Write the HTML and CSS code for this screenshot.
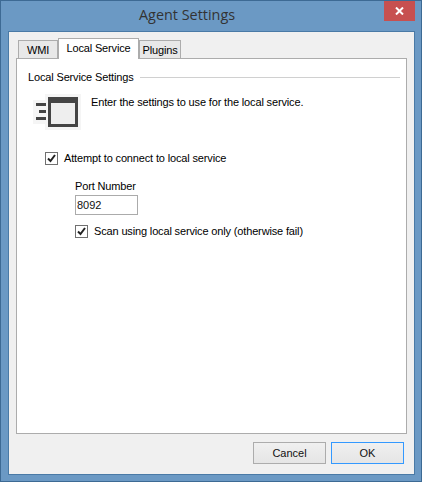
FILE: index.html
```html
<!DOCTYPE html>
<html lang="en">

<head>
  <meta charset="UTF-8">
  <title>Agent Settings</title>
  <link rel="stylesheet" href="styles.css">
</head>

<body>
  <div class="window">
    <div class="titlebar">
      <span class="title">Agent Settings</span>
      <button class="close-btn">
        <svg width="9" height="8" viewBox="0 0 9 8">
          <path d="M1 0.5 L8 7.5 M8 0.5 L1 7.5" stroke="#fff" stroke-width="2" fill="none" />
        </svg>
      </button>
    </div>

    <div class="client">
      <div class="tabs">
        <div class="tab tab-wmi">WMI</div>
        <div class="tab active">Local Service</div>
        <div class="tab tab-plugins">Plugins</div>
      </div>

      <div class="panel">
        <div class="group-head">
          <span>Local Service Settings</span>
          <div class="group-line"></div>
        </div>

        <div class="intro">
          <svg class="intro-icon" width="48" height="36" viewBox="0 0 48 36">
            <rect x="0" y="6" width="14" height="24" fill="#f5f5f5" />
            <rect x="12" y="0" width="36" height="36" fill="#f5f5f5" />
            <rect x="3" y="9" width="10" height="3" fill="#444" />
            <rect x="6" y="16" width="7" height="3" fill="#444" />
            <rect x="3" y="23" width="10" height="3" fill="#444" />
            <rect x="15" y="3" width="30" height="30" fill="#444" />
            <rect x="18" y="9" width="24" height="21" fill="#eee" />
          </svg>
          <span class="intro-text">Enter the settings to use for the local service.</span>
        </div>

        <label class="check-row">
          <span class="check">
            <svg width="11" height="11" viewBox="0 0 11 11">
              <path d="M2 5.5 L4.5 8 L9 2" stroke="#222" stroke-width="2" fill="none" />
            </svg>
          </span>
          Attempt to connect to local service
        </label>

        <div class="sub">
          <div class="port-label">Port Number</div>
          <input class="port-input" type="text" value="8092">
          <label class="check-row">
            <span class="check">
              <svg width="11" height="11" viewBox="0 0 11 11">
                <path d="M2 5.5 L4.5 8 L9 2" stroke="#222" stroke-width="2" fill="none" />
              </svg>
            </span>
            Scan using local service only (otherwise fail)
          </label>
        </div>
      </div>

      <div class="footer">
        <button class="btn">Cancel</button>
        <button class="btn default">OK</button>
      </div>
    </div>
  </div>
</body>

</html>
```

FILE: styles.css
```css
html, body {
  margin: 0;
  height: 100%;
}

body {
  font-family: "Liberation Sans", Arial, sans-serif;
  font-size: 11px;
  letter-spacing: -0.15px;
  color: #000;
}

.window {
  box-sizing: border-box;
  width: 422px;
  height: 482px;
  display: flex;
  flex-direction: column;
  background: #6b99c4;
  border: 1px solid #3d6a94;
  padding: 0 6px 6px 7px;
}

.titlebar {
  height: 30px;
  flex: none;
  display: flex;
  align-items: flex-start;
}

.title {
  margin-left: 131px;
  margin-top: 4px;
  font-family: "Open Sans", sans-serif;
  font-size: 14.4px;
  letter-spacing: 0;
  line-height: 20px;
  color: #333;
}

.close-btn {
  margin-left: auto;
  margin-right: 0;
  width: 31px;
  height: 20px;
  padding: 0;
  border: none;
  background: #c75050;
  display: flex;
  align-items: center;
  justify-content: center;
}

.client {
  flex: 1;
  display: flex;
  flex-direction: column;
  background: #f0f0f0;
  border: 1px solid #4a7aa6;
  padding: 6px 7px 10px 7px;
}

.tabs {
  display: flex;
  align-items: flex-end;
  height: 21px;
  padding-left: 2px;
  margin-bottom: -1px;
  flex: none;
}

.tab {
  box-sizing: border-box;
  height: 19px;
  line-height: 19px;
  text-align: center;
  background: #e8e8e8;
  border: 1px solid #acacac;
  border-bottom: none;
}

.tab-wmi {
  width: 40px;
}

.tab-plugins {
  width: 42px;
}

.tab.active {
  width: 81px;
  height: 21px;
  line-height: 18px;
  background: #fff;
  position: relative;
  z-index: 1;
}

.panel {
  flex: 1;
  background: #fff;
  border: 1px solid #acacac;
  padding: 10px 6px 0 11px;
}

.group-head {
  display: flex;
  align-items: center;
  gap: 6px;
  height: 16px;
}

.group-line {
  flex: 1;
  height: 1px;
  background: #d0d0d0;
}

.intro {
  display: flex;
  align-items: flex-start;
  margin: 9px 0 0 5px;
  gap: 10px;
}

.intro-icon {
  flex: none;
}

.intro-text {
  line-height: 16px;
}

.check-row {
  display: flex;
  align-items: center;
  gap: 6px;
  height: 16px;
}

.intro + .check-row {
  margin: 20px 0 0 17px;
}

.check {
  box-sizing: border-box;
  width: 13px;
  height: 13px;
  background: #fff;
  border: 1px solid #707070;
  display: flex;
  align-items: center;
  justify-content: center;
}

.sub {
  margin: 13px 0 0 47px;
}

.port-label {
  line-height: 14px;
}

.port-input {
  display: block;
  box-sizing: border-box;
  width: 63px;
  height: 20px;
  margin-top: 2px;
  padding: 0 1px;
  border: 1px solid #ababab;
  font: inherit;
  letter-spacing: 0;
  color: #111;
}

.sub .check-row {
  margin-top: 8px;
}

.footer {
  flex: none;
  display: flex;
  justify-content: flex-end;
  gap: 5px;
  margin-top: 8px;
  padding-right: 3px;
}

.btn {
  box-sizing: border-box;
  width: 73px;
  height: 22px;
  padding: 0;
  border: 1px solid #acacac;
  background: linear-gradient(#f0f0f0, #e5e5e5);
  font: inherit;
  letter-spacing: 0;
  color: #111;
}

.btn.default {
  border-color: #3399ff;
}
```
